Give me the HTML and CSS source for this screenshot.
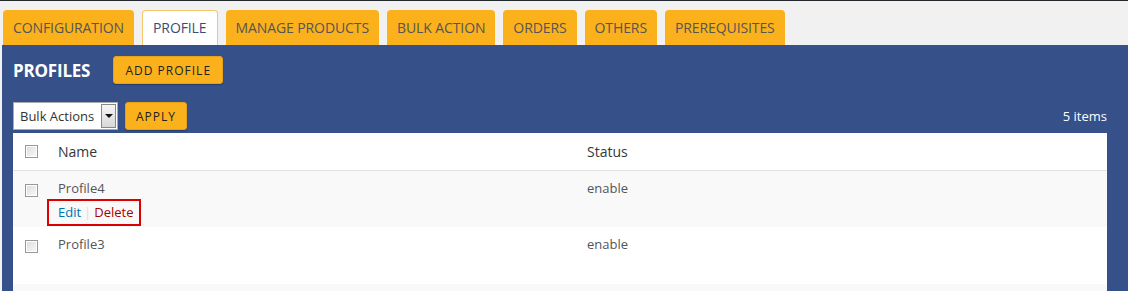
FILE: index.html
```html
<!DOCTYPE html>
<html lang="en">

<head>
    <meta charset="UTF-8">
    <title>Profiles</title>
    <link rel="stylesheet" href="styles.css">
</head>

<body>
    <div class="wrap">
        <div class="tabs">
            <a class="tab">CONFIGURATION</a>
            <a class="tab active">PROFILE</a>
            <a class="tab">MANAGE PRODUCTS</a>
            <a class="tab">BULK ACTION</a>
            <a class="tab">ORDERS</a>
            <a class="tab">OTHERS</a>
            <a class="tab">PREREQUISITES</a>
        </div>

        <div class="panel">
            <div class="panel-head">
                <h2>PROFILES</h2>
                <button class="btn btn-add">ADD PROFILE</button>
            </div>

            <div class="toolbar">
                <div class="select">
                    <span>Bulk Actions</span>
                    <span class="arrow"></span>
                </div>
                <button class="btn btn-apply">APPLY</button>
                <span class="count">5 items</span>
            </div>

            <table class="list">
                <thead>
                    <tr>
                        <th class="cb"><span class="check"></span></th>
                        <th class="col-name">Name</th>
                        <th>Status</th>
                    </tr>
                </thead>
                <tbody>
                    <tr class="alt">
                        <td class="cb"><span class="check"></span></td>
                        <td class="col-name">
                            <div>Profile4</div>
                            <div class="row-actions">
                                <a class="edit">Edit</a><span class="sep">|</span><a class="delete">Delete</a>
                            </div>
                        </td>
                        <td>enable</td>
                    </tr>
                    <tr>
                        <td class="cb"><span class="check"></span></td>
                        <td class="col-name">Profile3</td>
                        <td>enable</td>
                    </tr>
                    <tr class="alt">
                        <td class="cb"></td>
                        <td class="col-name"></td>
                        <td></td>
                    </tr>
                </tbody>
            </table>
        </div>
    </div>
</body>

</html>
```

FILE: styles.css
```css
* {
    margin: 0;
    padding: 0;
    box-sizing: border-box;
}

body {
    background: #f1f1f1;
    border-top: 1px solid #23282d;
    font-family: "Open Sans", sans-serif;
    font-size: 13px;
    color: #555;
    overflow: hidden;
    height: 291px;
}

.wrap {
    padding-left: 2px;
}

.tabs {
    display: flex;
    gap: 8px;
    padding: 9px 0 0 1px;
}

.tab {
    display: block;
    height: 35px;
    line-height: 36px;
    padding: 0 10px;
    background: #fbb11b;
    border-radius: 4px 4px 0 0;
    color: #555;
    font-size: 14px;
    letter-spacing: -0.1px;
}

.tab.active {
    background: #fff;
    border: 1px solid #f5c669;
    border-bottom: none;
    color: #3c4c78;
    line-height: 34px;
}

.panel {
    background: #365089;
    padding: 11px 21px 0 11px;
    height: 260px;
}

.panel-head {
    display: flex;
    align-items: center;
    gap: 23px;
    height: 28px;
}

.panel-head h2 {
    color: #fff;
    font-size: 17px;
    font-weight: 700;
    letter-spacing: -0.2px;
}

.btn {
    background: #fbb11b;
    border: 1px solid #e6a11a;
    border-radius: 3px;
    color: #222;
    font-family: inherit;
    font-size: 12px;
    letter-spacing: 1px;
    height: 28px;
    box-shadow: 0 1px 1px rgba(0, 0, 0, 0.25);
}

.btn-add {
    width: 110px;
}

.toolbar {
    display: flex;
    align-items: center;
    margin-top: 18px;
    height: 28px;
}

.select {
    display: flex;
    align-items: center;
    justify-content: space-between;
    width: 105px;
    height: 28px;
    background: #fff;
    border: 1px solid #aaa;
    padding: 0 1px 0 6px;
    color: #333;
    font-size: 13px;
}

.arrow {
    position: relative;
    width: 15px;
    height: 24px;
    border: 1px solid #888;
    background: linear-gradient(#f6f6f6, #d8d8d8);
}

.arrow::after {
    content: "";
    position: absolute;
    left: 3px;
    top: 9px;
    border-left: 4px solid transparent;
    border-right: 4px solid transparent;
    border-top: 4px solid #111;
}

.btn-apply {
    width: 62px;
    margin-left: 7px;
}

.count {
    margin-left: auto;
    color: #fff;
    font-size: 13px;
}

.list {
    width: 100%;
    margin-top: 3px;
    background: #fff;
    border-collapse: collapse;
}

.list th {
    height: 37px;
    text-align: left;
    font-weight: 400;
    font-size: 14px;
    color: #32373c;
    border-bottom: 1px solid #e1e1e1;
    vertical-align: middle;
}

.list td {
    vertical-align: top;
    padding-top: 8px;
    height: 57px;
    color: #555;
}

.list tr.alt td {
    background: #f9f9f9;
}

.cb {
    width: 45px;
    padding-left: 12px;
}

.list td.cb {
    padding-top: 13px;
}

.col-name {
    width: 529px;
}

.check {
    display: block;
    width: 13px;
    height: 13px;
    border: 1px solid #999;
    background: linear-gradient(135deg, #dcdcdc, #fafafa);
    box-shadow: inset 0 0 0 1px #fff;
}

.row-actions {
    display: flex;
    align-items: center;
    margin: 2px 0 1px -11px;
    padding: 0 0 0 9px;
    border: 2px solid #dd0000;
    width: 94px;
    height: 27px;
}

.row-actions .edit {
    color: #0073aa;
}

.row-actions .sep {
    color: #ddd;
    margin: 0 3px;
}

.row-actions .delete {
    color: #a00;
}
```
